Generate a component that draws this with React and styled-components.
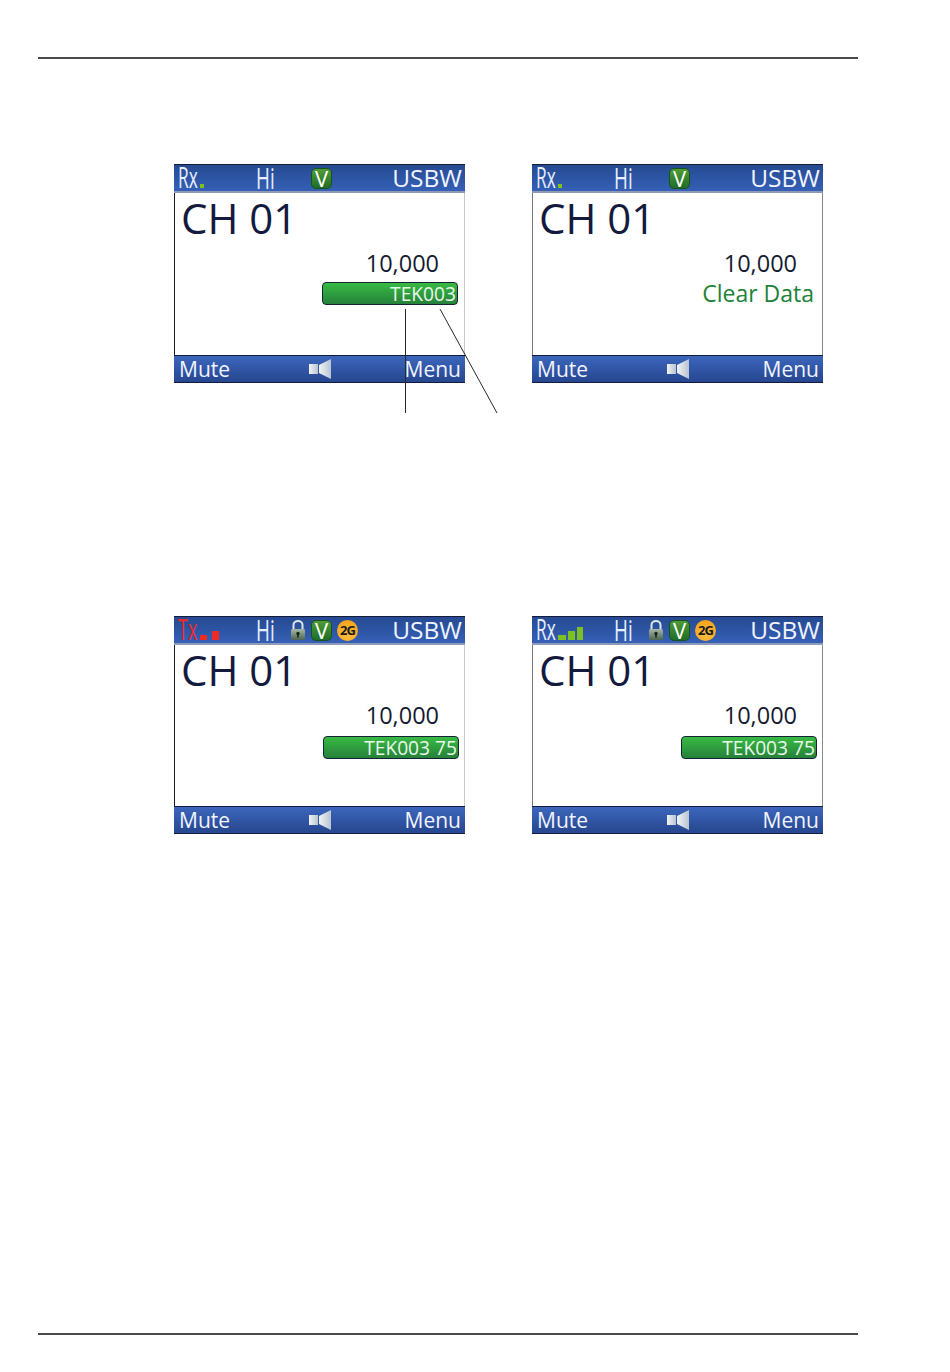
import React from 'react';
import styled, { createGlobalStyle } from 'styled-components';

const GlobalStyle = createGlobalStyle`
  html, body { margin: 0; padding: 0; background: #fff; }
  body { font-family: "Open Sans", "Noto Sans", sans-serif; }
`;

const Page = styled.div`
  width: 950px;
  height: 1372px;
  box-sizing: border-box;
  padding-top: 57px;
  display: flex;
  flex-direction: column;
  overflow: hidden;
`;

const Rule = styled.div`
  width: 820px;
  height: 2px;
  margin-left: 38px;
  background: #4a4a4a;
  flex: none;
`;

const BottomGap = styled.div`
  height: 37px;
  flex: none;
`;

const Figures = styled.div`
  flex: 1;
  display: flex;
  flex-direction: column;
  gap: 233px;
  padding: 105px 0 0 174px;
`;

const Row = styled.div`
  display: flex;
  gap: 67px;
  position: relative;
`;

const Screen = styled.div`
  width: 291px;
  height: ${p => (p.$short ? 218 : 219)}px;
  box-sizing: border-box;
  display: flex;
  flex-direction: column;
  background: #fff;
  border-left: 1px solid ${p => (p.$right ? '#777' : '#1a1a2a')};
  border-right: 1px solid ${p => (p.$right ? '#8a8a8a' : '#c8c8c8')};
  line-height: 1;
`;

const TopBar = styled.div`
  height: 29px;
  flex: none;
  box-sizing: border-box;
  display: flex;
  align-items: center;
  padding: 0 3px 0 3px;
  margin: 0 -1px;
  color: #f4f7ff;
  background: linear-gradient(#264a92, #3560b6);
  border-top: 1px solid #141c3c;
  border-bottom: 2px solid #8f9ab8;
`;

const Condensed = styled.span`
  display: block;
  flex: none;
  font-size: 29px;
  line-height: 24px;
  transform-origin: left center;
`;

const Status = styled.div`
  width: 79px;
  flex: none;
  display: flex;
  align-items: flex-end;
  height: 22px;
`;

const StatusLabel = styled(Condensed)`
  width: 22px;
  margin-left: 1px;
  transform: scaleX(${p => (p.$tx ? 0.62 : 0.6)});
  color: ${p => (p.$tx ? '#ea2a2a' : '#e6eeff')};
`;

const Signal = styled.div`
  display: flex;
  align-items: flex-end;
  gap: ${p => p.$gap}px;
  margin-bottom: 1px;
`;

const Level = styled.i`
  display: block;
  width: ${p => p.$w}px;
  height: ${p => p.$h}px;
  background: ${p => p.$color};
`;

const PowerLabel = styled(Condensed)`
  width: 34px;
  transform: scaleX(0.65);
  color: #e6eeff;
`;

const Badges = styled.div`
  display: grid;
  grid-template-columns: 16px 21px 21px;
  column-gap: 5px;
  align-items: center;
  flex: none;
`;

const BadgeV = styled.span`
  grid-column: 2;
  width: 21px;
  height: 21px;
  box-sizing: border-box;
  border-radius: 5px;
  display: flex;
  align-items: center;
  justify-content: center;
  background: linear-gradient(#4f9c35, #1f6d28);
  border: 1px solid #17521f;
  color: #fff;
  font-size: 22px;
  line-height: 1;
`;

const Badge2G = styled.span`
  width: 21px;
  height: 21px;
  border-radius: 50%;
  display: flex;
  align-items: center;
  justify-content: center;
  background: radial-gradient(circle at 50% 70%, #fdc040, #f39a12);
  color: #1a1a1a;
  font-size: 13px;
  font-weight: 700;
  letter-spacing: -0.8px;
`;

const Mode = styled.span`
  margin-left: auto;
  font-size: 24.5px;
  color: #f0f4ff;
`;

const Body = styled.div`
  flex: 1;
  display: flex;
  flex-direction: column;
  padding-left: 6px;
  min-height: 0;
`;

const Channel = styled.div`
  font-size: 42px;
  line-height: 50px;
  color: #141a3e;
`;

const Frequency = styled.div`
  align-self: flex-end;
  margin: 5px 25px 0 0;
  font-size: 23.5px;
  line-height: 30px;
  color: #141a30;
`;

const Tag = styled.div`
  align-self: flex-end;
  width: 136px;
  height: 23px;
  box-sizing: border-box;
  margin: ${p => p.$top}px ${p => p.$right}px 0 0;
  padding-right: 1px;
  display: flex;
  align-items: center;
  justify-content: flex-end;
  border: 1px solid #142436;
  border-radius: 4px;
  background: linear-gradient(#38ba43, #26813a);
  color: #e8f8e8;
  font-size: 19.2px;
`;

const ClearData = styled.div`
  align-self: flex-end;
  margin: 1px 8px 0 0;
  font-size: 23px;
  line-height: 29px;
  color: #1c8238;
`;

const BottomBar = styled.div`
  height: 28px;
  flex: none;
  box-sizing: border-box;
  display: flex;
  align-items: center;
  padding: 0 4px 0 5px;
  margin: 0 -1px;
  color: #f0f4ff;
  font-size: 21px;
  background: linear-gradient(#3c66bc, #26468f);
  border-top: 1px solid #141c3c;
  border-bottom: 1px solid #141c3c;
`;

const MuteKey = styled.span`
  width: 130px;
  flex: none;
`;

const MenuKey = styled.span`
  margin-left: auto;
`;

const Leaders = styled.svg`
  position: absolute;
  left: 226px;
  top: 140px;
  overflow: visible;
  pointer-events: none;
`;

const Speaker = () => (
  <svg width="23" height="22" viewBox="0 0 23 22">
    <defs>
      <linearGradient id="spk" x1="0" y1="0" x2="1" y2="0">
        <stop offset="0" stopColor="#f2f4f6" />
        <stop offset="1" stopColor="#b8c4d0" />
      </linearGradient>
    </defs>
    <rect x="0" y="6" width="9" height="10" fill="url(#spk)" />
    <path d="M10 7 L22 1 V21 L10 15 Z" fill="url(#spk)" />
  </svg>
);

const Lock = () => (
  <svg width="16" height="22" viewBox="0 0 16 22">
    <defs>
      <linearGradient id="lockBody" x1="0" y1="0" x2="0" y2="1">
        <stop offset="0" stopColor="#a4b8a8" />
        <stop offset="1" stopColor="#4c6452" />
      </linearGradient>
    </defs>
    <path d="M3.5 10 V6 C3.5 0.8 12.5 0.8 12.5 6 V10" fill="none" stroke="#dfe5e8" strokeWidth="2" />
    <rect x="1" y="10" width="14" height="11" rx="1.5" fill="url(#lockBody)" />
    <circle cx="8" cy="14.5" r="1.7" fill="#18221c" />
    <rect x="7.2" y="15" width="1.6" height="3.6" fill="#18221c" />
  </svg>
);

const RX_ONE = [{ w: 4, h: 4 }];
const TX_TWO = [{ w: 7, h: 5 }, { w: 7, h: 9 }];
const RX_THREE = [{ w: 8, h: 5 }, { w: 7, h: 9 }, { w: 6, h: 13 }];

const screens = [
  [
    { status: 'Rx', levels: RX_ONE, tag: 'TEK003', tagRight: 6 },
    { status: 'Rx', levels: RX_ONE, clear: true, right: true },
  ],
  [
    { status: 'Tx', levels: TX_TWO, tag: 'TEK003 75', tagRight: 5, extras: true },
    { status: 'Rx', levels: RX_THREE, tag: 'TEK003 75', tagRight: 5, extras: true, right: true },
  ],
];

const Device = ({ status, levels, tag, tagRight, clear, extras, right }) => {
  const tx = status === 'Tx';
  const color = tx ? '#ee2a24' : '#7cc022';
  return (
    <Screen $right={right} $short={extras}>
      <TopBar>
        <Status>
          <StatusLabel $tx={tx}>{status}</StatusLabel>
          <Signal $gap={tx ? 5 : 2}>
            {levels.map((l, i) => <Level key={i} $w={l.w} $h={l.h} $color={color} />)}
          </Signal>
        </Status>
        <PowerLabel>Hi</PowerLabel>
        <Badges>
          {extras && <Lock />}
          <BadgeV>V</BadgeV>
          {extras && <Badge2G>2G</Badge2G>}
        </Badges>
        <Mode>USBW</Mode>
      </TopBar>
      <Body>
        <Channel>CH 01</Channel>
        <Frequency>10,000</Frequency>
        {clear && <ClearData>Clear Data</ClearData>}
        {tag && <Tag $top={extras ? 6 : 4} $right={tagRight}>{tag}</Tag>}
      </Body>
      <BottomBar>
        <MuteKey>Mute</MuteKey>
        <Speaker />
        <MenuKey>Menu</MenuKey>
      </BottomBar>
    </Screen>
  );
};

export default function App() {
  return (
    <Page>
      <GlobalStyle />
      <Rule />
      <Figures>
        {screens.map((row, i) => (
          <Row key={i}>
            {row.map((s, j) => <Device key={j} {...s} />)}
            {i === 0 && (
              <Leaders width="100" height="110">
                <line x1="5.5" y1="5" x2="5.5" y2="109" stroke="#2a2a2a" strokeWidth="1" />
                <line x1="40" y1="5" x2="97" y2="109" stroke="#2a2a2a" strokeWidth="1" />
              </Leaders>
            )}
          </Row>
        ))}
      </Figures>
      <Rule />
      <BottomGap />
    </Page>
  );
}
